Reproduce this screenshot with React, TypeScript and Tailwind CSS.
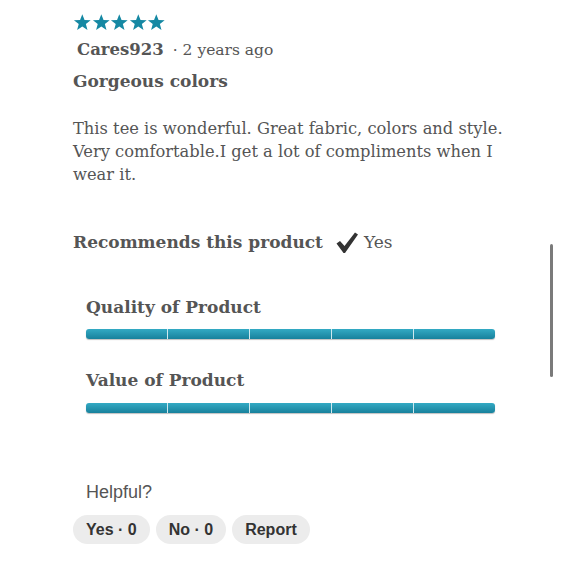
import React from "react";

const serif = "font-['DejaVu_Serif','Liberation_Serif',serif]";
const sans = "font-['Liberation_Sans',Arial,sans-serif]";

const Star = () => (
  <svg viewBox="0 0 24 24" className="w-[18.6px] h-[18.6px]" fill="#1588a3">
    <polygon points="12,1.5 14.9,8.9 22.8,9.3 16.6,14.2 18.7,21.9 12,17.5 5.3,21.9 7.4,14.2 1.2,9.3 9.1,8.9" />
  </svg>
);

const RatingBar = () => (
  <div className="flex w-[409px] h-[10px] rounded-[3px] overflow-hidden bg-gradient-to-b from-[#33aac4] to-[#17819c] shadow-[0_1px_1px_rgba(0,0,0,0.25)]">
    {[0, 1, 2, 3, 4].map((i) => (
      <div
        key={i}
        className={"flex-1 " + (i < 4 ? "border-r border-[#cfe9ef]" : "")}
      />
    ))}
  </div>
);

const Pill = ({ children }: { children: React.ReactNode }) => (
  <button
    className={`${sans} h-[29px] px-[13px] rounded-full bg-[#ececec] text-[#333] text-[16px] font-bold`}
  >
    {children}
  </button>
);

export default function App() {
  return (
    <div className="relative w-[580px] h-[580px] bg-white overflow-hidden">
      <div className="flex flex-col pl-[73px] pt-[13px]">
        <div className="flex">
          {[0, 1, 2, 3, 4].map((i) => (
            <Star key={i} />
          ))}
        </div>
        <div className={`${serif} flex items-baseline mt-[6px] pl-[4px] text-[#555]`}>
          <span className="text-[16.5px] font-bold">Cares923</span>
          <span className="text-[15.5px] ml-[9px]">· 2 years ago</span>
        </div>
        <div className={`${serif} mt-[7px] text-[17px] font-bold text-[#555]`}>
          Gorgeous colors
        </div>
        <p className={`${serif} mt-[22px] w-[450px] text-[16.3px] leading-[23px] text-[#555]`}>
          This tee is wonderful. Great fabric, colors and style. Very
          comfortable.I get a lot of compliments when I wear it.
        </p>
        <div className={`${serif} flex items-center mt-[44px] text-[#555]`}>
          <span className="text-[17px] font-bold">Recommends this product</span>
          <svg viewBox="0 0 24 24" className="w-[24px] h-[24px] ml-[12px]" fill="#333">
            <path d="M1.5 12.5 L5 10 L9.5 15 L20 1.5 L23 3.5 L10 22 L8.5 22 Z" />
          </svg>
          <span className="text-[17px] ml-[5px]">Yes</span>
        </div>
        <div className="flex flex-col pl-[13px] mt-[40px]">
          <div className={`${serif} text-[17px] font-bold text-[#555]`}>
            Quality of Product
          </div>
          <div className="mt-[8px]">
            <RatingBar />
          </div>
          <div className={`${serif} text-[17px] font-bold text-[#555] mt-[29px]`}>
            Value of Product
          </div>
          <div className="mt-[10px]">
            <RatingBar />
          </div>
          <div className={`${sans} text-[18px] text-[#555] mt-[66px]`}>
            Helpful?
          </div>
        </div>
        <div className="flex gap-[6px] mt-[9px]">
          <Pill>Yes · 0</Pill>
          <Pill>No · 0</Pill>
          <Pill>Report</Pill>
        </div>
      </div>
      <div className="absolute left-[550px] top-[244px] w-[3px] h-[133px] rounded-full bg-[#7a7a7a]" />
    </div>
  );
}
